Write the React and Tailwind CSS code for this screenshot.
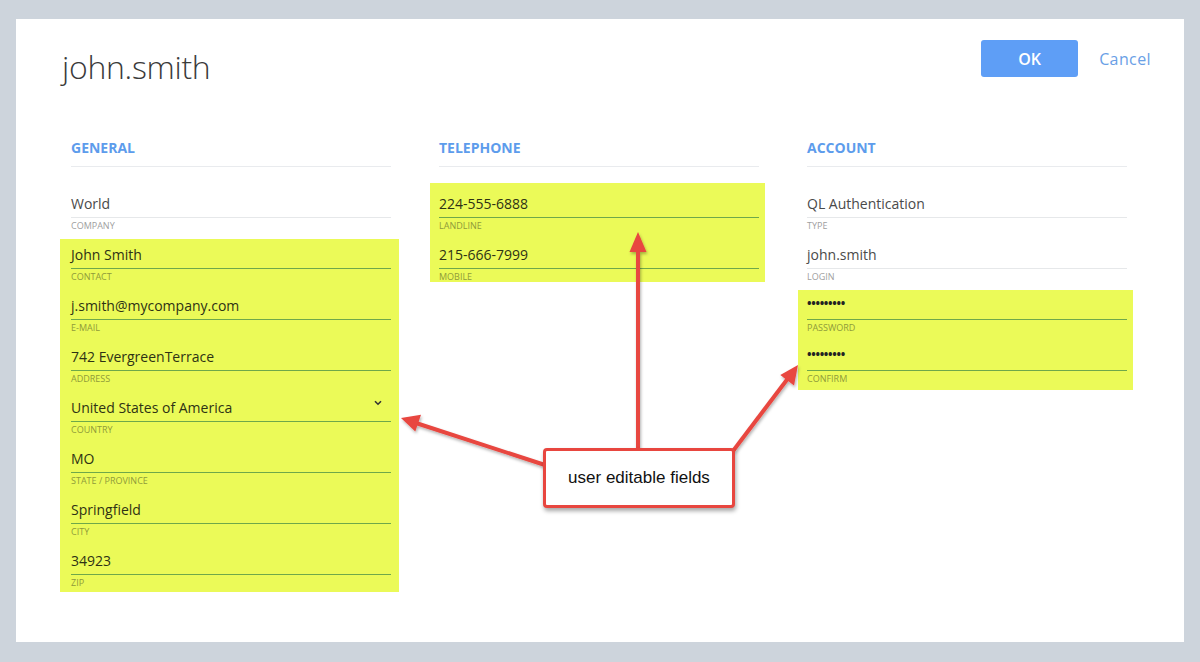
import React from "react";

const OPEN = "font-['Open_Sans',sans-serif]";

function Field({ value, label, hl, select, dots }) {
  return (
    <div className="h-[51px]">
      <div
        className={`h-[30px] pt-[1px] flex items-center justify-between border-b ${
          hl ? "border-[#6ea84a]" : "border-[#e6e8ea]"
        }`}
      >
        <span
          className={
            dots
              ? "text-[12px] font-bold tracking-[-0.3px] text-[#222] leading-none -mt-[3px]"
              : `text-[14px] ${hl ? "text-[#2e3214]" : "text-[#4a4a4a]"}`
          }
        >
          {value}
        </span>
        {select && (
          <svg width="8" height="6" viewBox="0 0 8 6" className="mr-[9px] -mt-[8px]">
            <path d="M1 1.2 L4 4.2 L7 1.2" fill="none" stroke="#333" strokeWidth="1.6" />
          </svg>
        )}
      </div>
      <div
        className={`mt-[1px] text-[9px] leading-[13px] uppercase ${
          hl ? "text-[#8f9a3a]" : "text-[#a0a0a0]"
        }`}
      >
        {label}
      </div>
    </div>
  );
}

function Header({ children }) {
  return (
    <div className="h-[29px] border-b border-[#e9ebee] text-[14px] font-bold leading-[20px] text-[#5d9cec] mb-[21px]">
      {children}
    </div>
  );
}

export default function App() {
  return (
    <div className={`w-[1200px] h-[662px] bg-[#cdd4dc] pt-[19px] px-[16px] relative ${OPEN}`}>
      <div className="w-[1168px] h-[623px] bg-white pt-[21px] pl-[46px] pr-[33px]">
        {/* title bar */}
        <div className="flex items-start justify-between h-[37px]">
          <h1 className="mt-[8px] text-[32px] leading-[37px] font-light tracking-[-0.3px] text-[#3a3a3a]">
            john.smith
          </h1>
          <div className="flex items-center gap-[21px]">
            <button className="w-[97px] h-[37px] rounded-[3px] bg-[#5e9ef6] text-white text-[16px] font-semibold">
              OK
            </button>
            <span className="text-[16px] tracking-[0.4px] text-[#6aa0e6] mt-[1px]">Cancel</span>
          </div>
        </div>

        {/* columns */}
        <div className="mt-[61px] ml-[9px] grid grid-cols-[320px_320px_320px] gap-x-[48px]">
          <div>
            <Header>GENERAL</Header>
            <Field value="World" label="Company" />
            <div className="-ml-[11px] -mr-[8px] pl-[11px] pr-[8px] bg-[#ebfa58] h-[353px] overflow-hidden">
              <Field hl value="John Smith" label="Contact" />
              <Field hl value="j.smith@mycompany.com" label="E-mail" />
              <Field hl value="742 EvergreenTerrace" label="Address" />
              <Field hl select value="United States of America" label="Country" />
              <Field hl value="MO" label="State / Province" />
              <Field hl value="Springfield" label="City" />
              <Field hl value="34923" label="Zip" />
            </div>
          </div>

          <div>
            <Header>TELEPHONE</Header>
            <div className="-mt-[5px] pt-[5px] -ml-[9px] -mr-[6px] pl-[9px] pr-[6px] bg-[#ebfa58] h-[99px] overflow-hidden">
              <Field hl value="224-555-6888" label="Landline" />
              <Field hl value="215-666-7999" label="Mobile" />
            </div>
          </div>

          <div>
            <Header>ACCOUNT</Header>
            <Field value="QL Authentication" label="Type" />
            <Field value="john.smith" label="Login" />
            <div className="-ml-[9px] -mr-[6px] pl-[9px] pr-[6px] bg-[#ebfa58] h-[100px] overflow-hidden">
              <Field hl dots value="•••••••••" label="Password" />
              <Field hl dots value="•••••••••" label="Confirm" />
            </div>
          </div>
        </div>
      </div>

      {/* annotation arrows */}
      <svg
        className="absolute left-0 top-0 pointer-events-none"
        width="1200"
        height="662"
        viewBox="0 0 1200 662"
      >
        <defs>
          <filter id="arrowShadow" x="-20%" y="-20%" width="140%" height="140%">
            <feDropShadow dx="1" dy="2" stdDeviation="1.5" floodColor="#000" floodOpacity="0.3" />
          </filter>
        </defs>
        <g filter="url(#arrowShadow)" fill="#e8463f" stroke="#e8463f">
          <line x1="638" y1="450" x2="638" y2="248" strokeWidth="4" />
          <polygon points="638,232 629.5,252 646.5,252" stroke="none" />
          <line x1="548" y1="466" x2="416" y2="423" strokeWidth="4" />
          <polygon points="401,418 415.3,431.6 421,414.7" stroke="none" />
          <line x1="733" y1="451" x2="789" y2="377" strokeWidth="4" />
          <polygon points="798,365 794,385.5 780.3,375" stroke="none" />
        </g>
      </svg>

      {/* callout */}
      <div className="absolute left-[543px] top-[448px] w-[192px] h-[60px] rounded-[4px] border-[3px] border-[#e8463f] bg-white shadow-[1px_3px_4px_rgba(0,0,0,0.35)] flex items-center justify-center">
        <span className="font-['Liberation_Sans',Arial,sans-serif] text-[17px] text-[#111]">
          user editable fields
        </span>
      </div>
    </div>
  );
}
